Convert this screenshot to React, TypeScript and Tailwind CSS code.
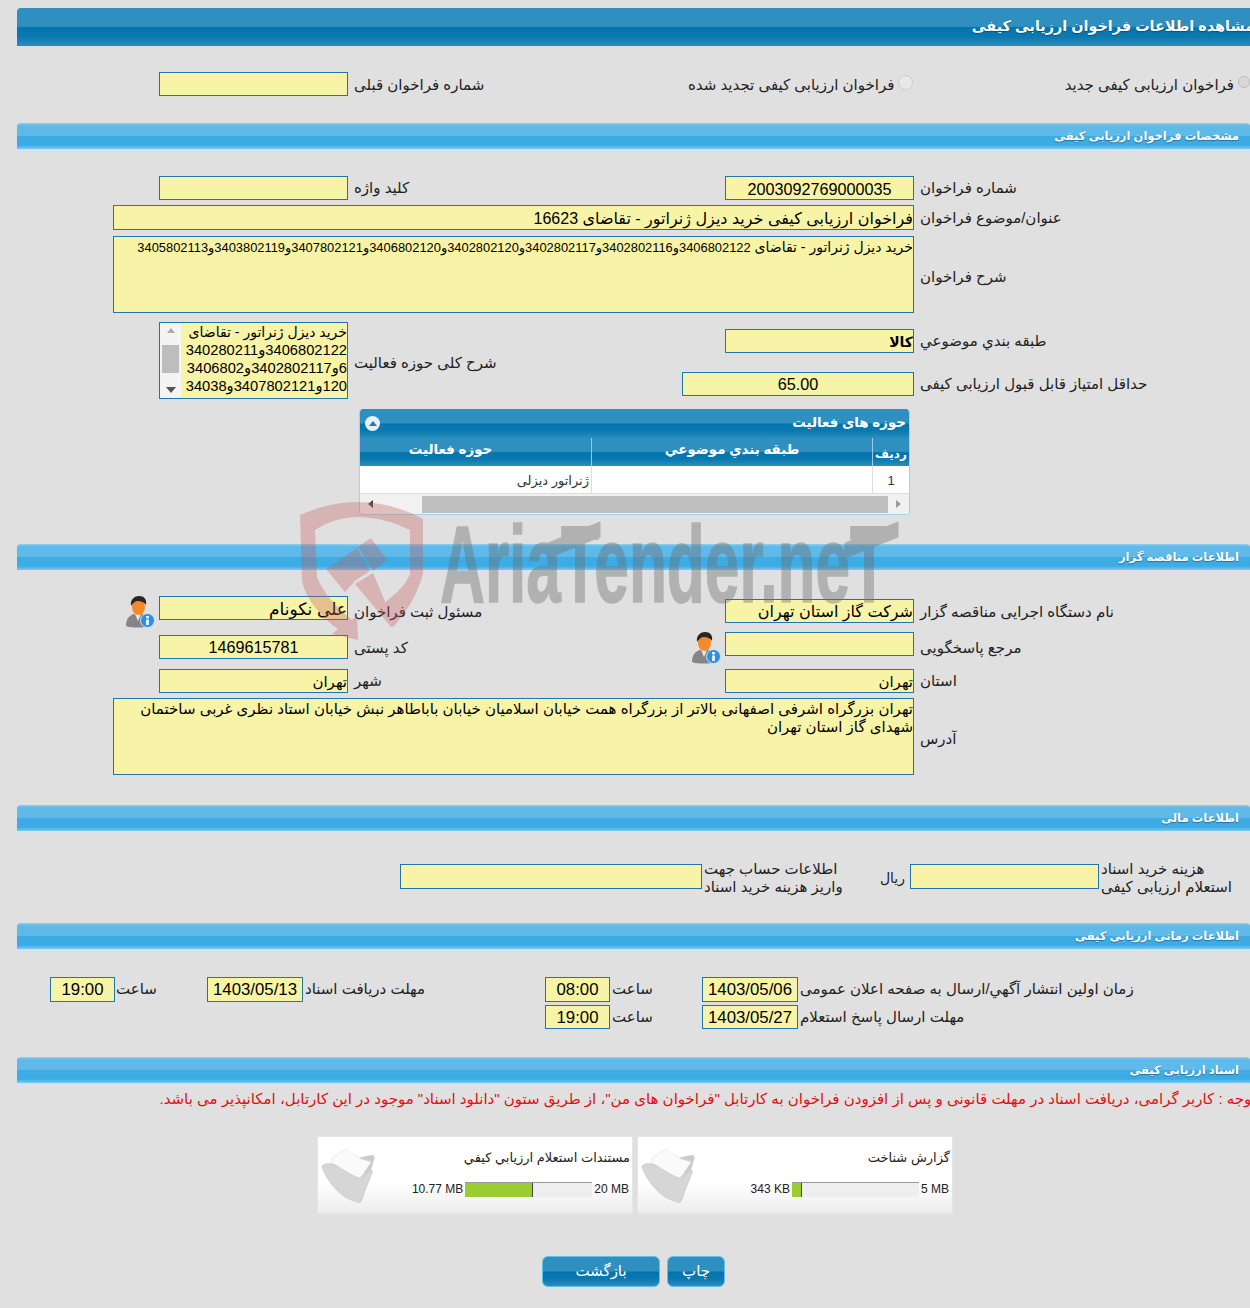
import React from 'react';

const titleBg = 'bg-[linear-gradient(to_bottom,#2f90bf_0%,#2f90bf_48%,#0274ad_52%,#0a79b0_75%,#2a8dbd_100%)]';
const sectionBg = 'bg-[linear-gradient(to_bottom,#8fd0f0_0%,#5fb9e9_10%,#5fb9e9_48%,#3dabe4_52%,#3dabe4_85%,#7cc8ee_100%)]';

function Section({ title }: { title: string }) {
  return (
    <div className={`h-[26px] ml-[17px] rounded-tr-[4px] rounded-tl-[4px] ${sectionBg} flex items-center pr-[11px] pt-[2px] text-white text-[11.5px] font-bold [text-shadow:0_1px_1px_#2a6f99]`}>
      {title}
    </div>
  );
}

function Box({ className = '', children }: { className?: string; children?: React.ReactNode }) {
  return (
    <div className={`bg-[#f7f4a8] border border-[#1f75ad] text-black overflow-hidden whitespace-nowrap shrink-0 ${className}`}>
      {children}
    </div>
  );
}

function Label({ className = '', children }: { className?: string; children: React.ReactNode }) {
  return <div className={`text-left text-[15px] text-[#222] shrink-0 ${className}`}>{children}</div>;
}

function PersonIcon({ className = '' }: { className?: string }) {
  return (
    <svg viewBox="0 0 30 32" className={`shrink-0 ${className}`}>
      <path d="M1 30c0-8 4-11 8-12h8c5 1 8 4 8 12-4 2-20 2-24 0z" fill="#858585" />
      <path d="M10 18l3 7 3-7z" fill="#e8e8e8" />
      <ellipse cx="13.5" cy="11" rx="6.5" ry="8" fill="#f58a2c" />
      <path d="M6 10C5 3 10 0 14 0c5 0 8 3 7 9-2-3-5-4-8-4-3 0-5 2-7 5z" fill="#262626" />
      <circle cx="22.5" cy="24.5" r="7" fill="#2f8fe0" stroke="#cfe6fa" strokeWidth="1" />
      <rect x="21.2" y="23.5" width="2.6" height="5.5" fill="#fff" />
      <rect x="21.2" y="20" width="2.6" height="2.4" fill="#fff" />
    </svg>
  );
}

function FolderIcon() {
  return (
    <svg viewBox="0 0 64 60" className="w-[64px] h-[60px] shrink-0 blur-[0.4px]">
      <path d="M40 13l15-3c2 0 3 2 2 5l-12 40c-1 2-2 2-3 2z" fill="#cbcbcb" />
      <path d="M15 13l12-8c1-1 2-1 3 0l14 9 10 3-11 17L15 19z" fill="#fafafa" stroke="#e2e2e2" strokeWidth="0.6" />
      <path d="M5 21c3-3 7-3 11-2 4 1 8 5 12 7 5 3 10 6 14 7 3 0 8-6 12-8 1 0 2 1 1 3L44 56c-1 2-2 2-4 1-6-2-12-4-16-8-5-4-10-10-13-15-3-5-6-10-6-13z" fill="#d6d6d6" stroke="#c4c4c4" strokeWidth="0.6" />
    </svg>
  );
}

function FileCard({ title, total, used, fill }: { title: string; total: string; used: string; fill: string }) {
  return (
    <div className="w-[316px] h-[78px] bg-[linear-gradient(to_bottom,#ffffff_60%,#ececec_100%)] border border-[#e6e6e6] flex items-center shrink-0">
      <div className="flex-1 pr-[2px]">
        <div className="text-[13px] text-[#222] leading-[16px] -mt-[2px]">{title}</div>
        <div dir="ltr" className="flex items-center justify-end mt-[14px] pr-[1px] text-[12px] text-[#222] gap-[2px]">
          <span>{used}</span>
          <div className="w-[127px] h-[15px] bg-[#eeeeee] border-t border-[#999] flex">
            <div className={`h-full bg-[#9acd32] border-r border-[#444] ${fill}`} />
          </div>
          <span>{total}</span>
        </div>
      </div>
      <div className="-ml-px">
        <FolderIcon />
      </div>
    </div>
  );
}

function Button({ className = '', children }: { className?: string; children: React.ReactNode }) {
  return (
    <div className={`h-[31px] rounded-[6px] border border-[#5fc0e8] ${titleBg} text-white text-[15px] flex items-center justify-center ${className}`}>
      {children}
    </div>
  );
}

function Watermark() {
  return (
    <svg dir="ltr" viewBox="0 0 620 150" className="absolute left-[295px] top-[498px] w-[620px] h-[150px] pointer-events-none">
      <g fill="#c65a5a" opacity="0.33">
        <path d="M5 17 C25 8 45 4 63 4 C85 4 108 10 128 21 L128 76 C122 98 110 116 98 129 L82 111 C95 100 110 90 115 76 L115 32 C98 24 80 19 63 19 C48 19 32 24 20 32 L22 79 C28 95 42 110 57 122 L62 117 L63 142 L37 136 L43 131 C25 118 10 100 7 82 Z" />
        <path d="M31 71L47 61L59 84L50 94Z" />
        <path d="M46 61L62 50L75 73L58 84Z" />
        <path d="M63 49L76 40L92 62L78 73Z" />
        <path d="M60 86L78 75L100 127L96 129Z" />
      </g>
      <g fill="#6d6d6d" stroke="#6d6d6d" opacity="0.4">
        <text x="145" y="104" textLength="448" lengthAdjust="spacingAndGlyphs" direction="ltr" fontFamily="'Liberation Sans', sans-serif" fontWeight="700" fontSize="110" strokeWidth="1.5">
          AriaTender.neT
        </text>
        <path d="M253 45l52-21v15l-52 21z M550 45l53-21v15l-53 21z" />
      </g>
    </svg>
  );
}

export default function App() {
  return (
    <div dir="rtl" className="relative w-[1250px] h-[1308px] overflow-hidden bg-[#e0e0e0] font-['Liberation_Sans','DejaVu_Sans',sans-serif]">
      {/* Title */}
      <div className="pt-[8px]">
        <div className={`h-[38px] ml-[17px] rounded-tl-[4px] ${titleBg} flex items-center text-white text-[14.4px] font-bold whitespace-nowrap mr-[-4px] [text-shadow:0_1px_1px_#14506f]`}>
          مشاهده اطلاعات فراخوان ارزيابی كيفی
        </div>
      </div>

      {/* Type radios */}
      <div className="flex items-center h-[24px] mt-[26px]">
        <div className="w-[12px] h-[12px] rounded-full bg-[#d8d8d8] border border-[#bbb] shrink-0 -mt-[4px]" />
        <Label className="w-[325px] text-right pr-[4px] mt-[2px]">فراخوان ارزيابی كيفی جديد</Label>
        <div className="w-[15px] h-[15px] rounded-full bg-[#e8e8e8] border border-[#ccc] shrink-0 -mt-[4px]" />
        <Label className="w-[210px] whitespace-nowrap pr-[2px] mt-[2px]">فراخوان ارزيابی كيفی تجديد شده</Label>
        <Label className="w-[334px] ml-[6px] mt-[2px]">شماره فراخوان قبلی</Label>
        <Box className="w-[189px] h-[24px]" />
      </div>

      <div className="mt-[27px]">
        <Section title="مشخصات فراخوان ارزيابی كيفی" />
      </div>

      {/* Main fields */}
      <div className="flex items-center mt-[27px]">
        <Label className="w-[330px] ml-[6px]">شماره فراخوان</Label>
        <Box className="w-[189px] h-[24px] text-[16.2px] leading-[24px] text-center">2003092769000035</Box>
        <Label className="w-[371px] ml-[6px]">كليد واژه</Label>
        <Box className="w-[189px] h-[24px]" />
      </div>
      <div className="flex items-center mt-[5px]">
        <Label className="w-[330px] ml-[6px] pt-[2px]">عنوان/موضوع فراخوان</Label>
        <Box className="w-[801px] h-[25px] text-[16px] leading-[26px]">فراخوان ارزيابی كيفی خريد ديزل ژنراتور - تقاضای 16623</Box>
      </div>
      <div className="flex items-center mt-[6px]">
        <Label className="w-[330px] ml-[6px] pt-[5px]">شرح فراخوان</Label>
        <Box className="w-[801px] h-[77px] text-[14px] leading-[18px] pt-px">
          خريد ديزل ژنراتور - تقاضای <span className="text-[12.9px]">3406802122و3402802116و3402802117و3402802120و3406802120و3407802121و3403802119و3405802113</span>
        </Box>
      </div>

      <div className="flex mt-[9px]">
        <div className="w-[525px] shrink-0">
          <div className="flex items-center mt-[7px]">
            <Label className="w-[330px] ml-[6px]">طبقه بندي موضوعي</Label>
            <Box className="w-[189px] h-[24px] text-[14px] font-bold leading-[24px]">كالا</Box>
          </div>
          <div className="flex items-center mt-[19px]">
            <Label className="w-[330px] ml-[6px]">حداقل امتياز قابل قبول ارزيابی كيفی</Label>
            <Box className="w-[232px] h-[24px] text-[16.2px] leading-[23px] text-center">65.00</Box>
          </div>
        </div>
        <div className="flex items-center">
          <Label className="w-[371px] ml-[6px] pt-[5px]">شرح كلی حوزه فعاليت</Label>
          <Box className="w-[189px] h-[77px] flex">
            <div className="flex-1 text-[14.7px] leading-[18px] overflow-hidden">
              <div className="text-[14px]">خريد ديزل ژنراتور - تقاضای</div>
              <div>3406802122و340280211</div>
              <div>6و3402802117و3406802</div>
              <div>120و3407802121و34038</div>
            </div>
            <div className="w-[21px] bg-[#f4f4f4] flex flex-col items-center justify-between py-[5px] shrink-0">
              <div className="w-0 h-0 border-x-[4px] border-x-transparent border-b-[5px] border-b-[#aaaaaa]" />
              <div className="w-[17px] h-[28px] bg-[#bdbdbd] -mt-[2px]" />
              <div className="w-0 h-0 border-x-[5px] border-x-transparent border-t-[6px] border-t-[#555]" />
            </div>
          </Box>
        </div>
      </div>

      {/* Activity grid */}
      <div className="w-[551px] h-[106px] mt-[10px] mr-[340px] rounded-[4px] overflow-hidden border-b border-x border-[#a8cfe6] bg-white">
        <div className={`h-[29px] ${titleBg} flex items-center justify-between text-white text-[13.4px] font-bold pr-[3px] pl-[5px]`}>
          <span>حوزه های فعاليت</span>
          <span className="w-[15px] h-[15px] rounded-full bg-[#e6f2f8] flex items-center justify-center">
            <span className="w-0 h-0 border-x-[4px] border-x-transparent border-b-[5px] border-b-[#1f7fb0]" />
          </span>
        </div>
        <div className={`flex h-[28px] ${titleBg} text-white text-[13.4px] font-bold`}>
          <div className="w-[37px] border-l border-[#9cc9e0] flex items-center justify-center text-[12px] whitespace-nowrap pt-[3px]">رديف</div>
          <div className="w-[281px] border-l border-[#9cc9e0] flex items-center justify-center pb-[3px]">طبقه بندي موضوعي</div>
          <div className="flex-1 flex items-center justify-center pr-[50px] pb-[3px]">حوزه فعاليت</div>
        </div>
        <div className="flex h-[28px] text-[13px] text-[#333] border-b border-[#dddddd]">
          <div className="w-[37px] border-l border-[#dddddd] flex items-center justify-center pt-[2px]">1</div>
          <div className="w-[281px] border-l border-[#dddddd]" />
          <div className="flex-1 flex items-center pr-[2px] pt-[2px]">ژنراتور ديزلی</div>
        </div>
        <div className="flex items-center h-[20px] bg-[#f1f1f1]">
          <div className="w-[21px] flex justify-center">
            <span className="w-0 h-0 border-y-[4px] border-y-transparent border-l-[5px] border-l-[#999]" />
          </div>
          <div className="w-[466px] h-[17px] bg-[#bfbfbf]" />
          <div className="flex-1 flex justify-end pl-[8px]">
            <span className="w-0 h-0 border-y-[4px] border-y-transparent border-r-[5px] border-r-[#444]" />
          </div>
        </div>
      </div>

      <div className="mt-[29px]">
        <Section title="اطلاعات مناقصه گزار" />
      </div>

      {/* Tender organizer */}
      <div className="flex items-start h-[27px] mt-[26px]">
        <Label className="w-[330px] ml-[6px] mt-[5px]">نام دستگاه اجرايی مناقصه گزار</Label>
        <Box className="w-[189px] h-[24px] mt-[3px] text-[16px] leading-[24px]">شركت گاز استان تهران</Box>
        <Label className="w-[371px] ml-[6px] mt-[5px]">مسئول ثبت فراخوان</Label>
        <Box className="w-[189px] h-[24px] text-[17px] leading-[25px]">علی نكونام</Box>
        <PersonIcon className="w-[30px] h-[32px] mr-[4px]" />
      </div>
      <div className="flex items-start h-[27px] mt-[9px]">
        <Label className="w-[330px] ml-[6px] mt-[5px]">مرجع پاسخگويی</Label>
        <Box className="w-[189px] h-[24px]" />
        <div className="w-[371px] ml-[6px] flex">
          <PersonIcon className="w-[30px] h-[32px] mr-[4px]" />
          <Label className="mr-[3px] w-[334px] mt-[5px]">كد پستی</Label>
        </div>
        <Box className="w-[189px] h-[24px] mt-[3px] text-[16.2px] leading-[23px] text-center">1469615781</Box>
      </div>
      <div className="flex items-center mt-[10px]">
        <Label className="w-[330px] ml-[6px]">استان</Label>
        <Box className="w-[189px] h-[24px] text-[15px] leading-[24px]">تهران</Box>
        <Label className="w-[371px] ml-[6px]">شهر</Label>
        <Box className="w-[189px] h-[24px] text-[15px] leading-[24px]">تهران</Box>
      </div>
      <div className="flex items-center mt-[5px]">
        <Label className="w-[330px] ml-[6px] pt-[5px]">آدرس</Label>
        <Box className="w-[801px] h-[77px] text-[15px] leading-[18px] pt-px">
          تهران بزرگراه اشرفی اصفهانی بالاتر از بزرگراه همت خيابان اسلاميان خيابان باباطاهر نبش خيابان استاد نظری غربی ساختمان
          <br />
          شهدای گاز استان تهران
        </Box>
      </div>

      <div className="mt-[30px]">
        <Section title="اطلاعات مالی" />
      </div>

      {/* Financial */}
      <div className="flex items-center h-[36px] mt-[29px]">
        <Label className="w-[149px] ml-[2px] leading-[18px]">
          هزينه خريد اسناد
          <br />
          استعلام ارزيابی كيفی
        </Label>
        <Box className="w-[189px] h-[25px] -mt-[3px]" />
        <div className="w-[30px] pr-[5px] text-[14px] text-[#222] shrink-0">ريال</div>
        <Label className="w-[176px] ml-[2px] leading-[18px]">
          اطلاعات حساب جهت
          <br />
          واريز هزينه خريد اسناد
        </Label>
        <Box className="w-[302px] h-[25px] -mt-[3px]" />
      </div>

      <div className="mt-[27px]">
        <Section title="اطلاعات زمانی ارزيابی كيفی" />
      </div>

      {/* Dates */}
      <div className="flex items-center mt-[28px]">
        <Label className="w-[450px] ml-[2px]">زمان اولين انتشار آگهي/ارسال به صفحه اعلان عمومی</Label>
        <Box className="w-[96px] h-[25px] text-[16.8px] leading-[24px] text-center">1403/05/06</Box>
        <Label className="w-[90px] ml-[2px]">ساعت</Label>
        <Box className="w-[65px] h-[25px] text-[16.8px] leading-[24px] text-center">08:00</Box>
        <Label className="w-[240px] ml-[2px]">مهلت دريافت اسناد</Label>
        <Box className="w-[96px] h-[25px] text-[16.8px] leading-[24px] text-center">1403/05/13</Box>
        <Label className="w-[91px] ml-[1px]">ساعت</Label>
        <Box className="w-[65px] h-[25px] text-[16.8px] leading-[24px] text-center">19:00</Box>
      </div>
      <div className="flex items-center mt-[3px]">
        <Label className="w-[450px] ml-[2px]">مهلت ارسال پاسخ استعلام</Label>
        <Box className="w-[96px] h-[24px] text-[16.8px] leading-[23px] text-center">1403/05/27</Box>
        <Label className="w-[90px] ml-[2px]">ساعت</Label>
        <Box className="w-[65px] h-[24px] text-[16.8px] leading-[23px] text-center">19:00</Box>
      </div>

      <div className="mt-[28px]">
        <Section title="اسناد ارزيابی كيفی" />
      </div>

      {/* Documents */}
      <div className="mt-[7px] mr-[-6px] text-[15px] leading-[18px] text-[#e01010] whitespace-nowrap">
        توجه : كاربر گرامی، دريافت اسناد در مهلت قانونی و پس از افزودن فراخوان به كارتابل "فراخوان های من"، از طريق ستون "دانلود اسناد" موجود در اين كارتابل، امكانپذير می باشد.
      </div>
      <div className="flex gap-[4px] mr-[297px] mt-[28px]">
        <FileCard title="گزارش شناخت" total="5 MB" used="343 KB" fill="w-[10px]" />
        <FileCard title="مستندات استعلام ارزيابي كيفي" total="20 MB" used="10.77 MB" fill="w-[68px]" />
      </div>
      <div className="flex gap-[7px] mr-[525px] mt-[42px]">
        <Button className="w-[58px]">چاپ</Button>
        <Button className="w-[118px]">بازگشت</Button>
      </div>

      <Watermark />
    </div>
  );
}
